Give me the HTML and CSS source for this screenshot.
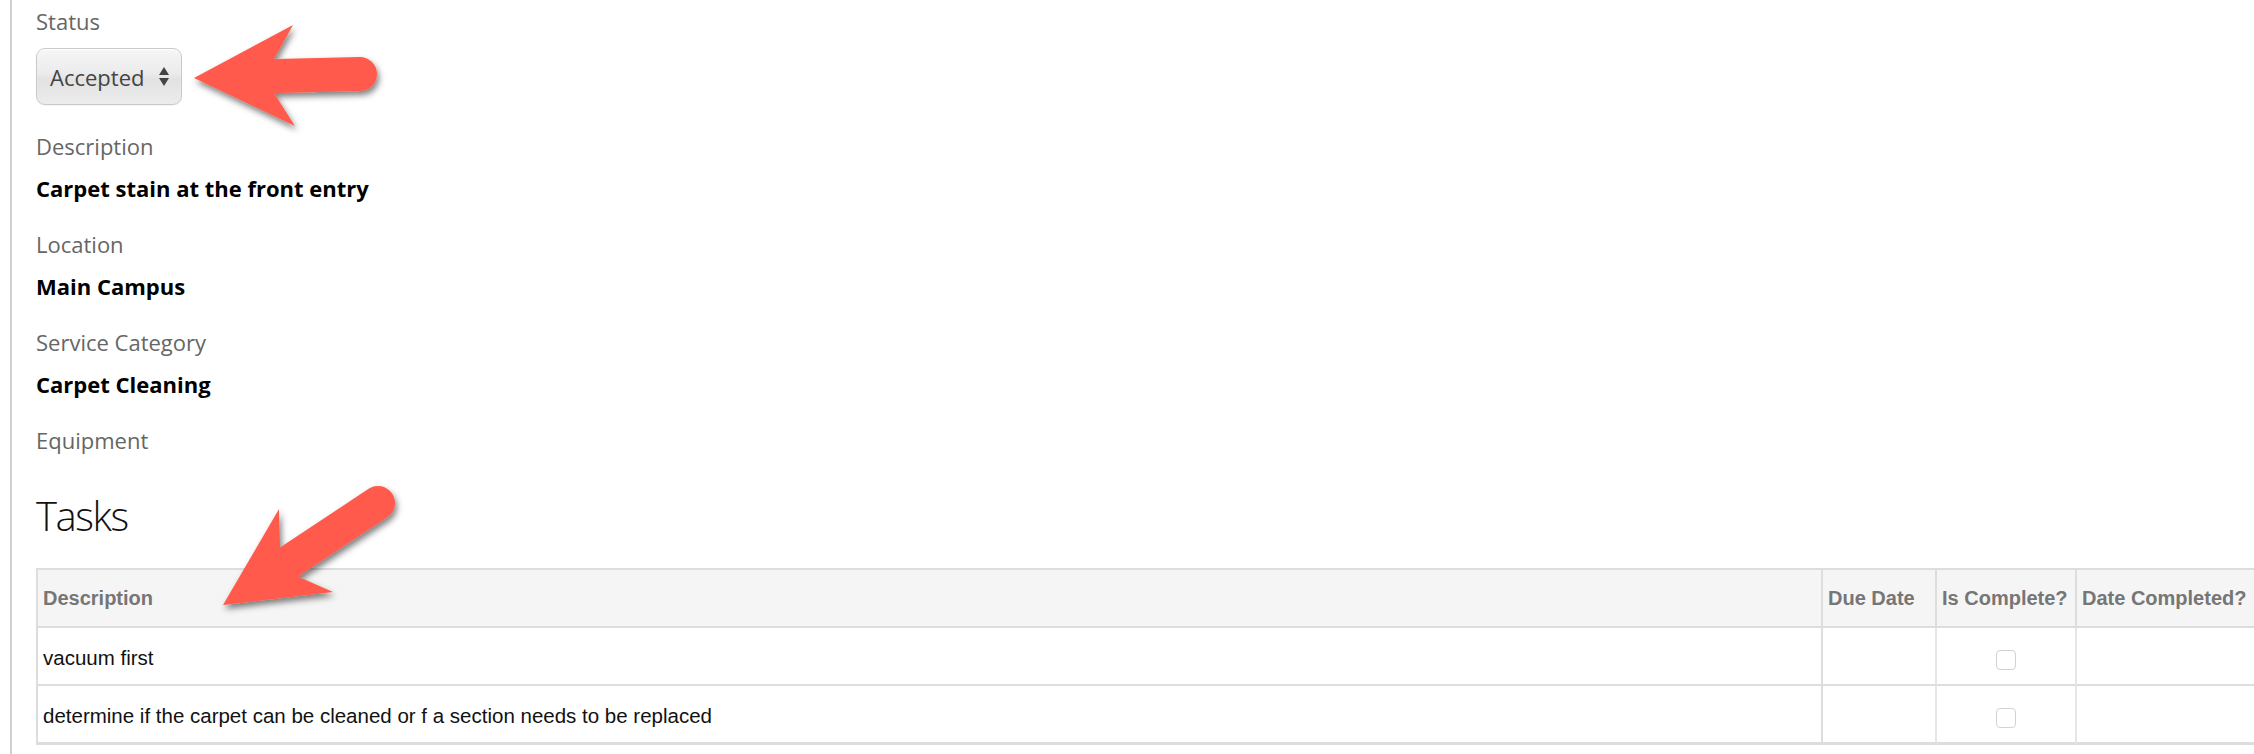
FILE: index.html
```html
<!DOCTYPE html>
<html lang="en">

<head>
    <meta charset="UTF-8">
    <title>Work Order</title>
    <link rel="stylesheet" href="styles.css">
</head>

<body>
    <div class="page">
        <div class="field">
            <div class="field-label">Status</div>
            <div class="select">
                <span class="select-text">Accepted</span>
                <svg class="select-arrows" width="10" height="20" viewBox="0 0 10 20">
                    <path d="M5 0 L10 8 L0 8 Z" fill="#444" />
                    <path d="M0 11 L10 11 L5 19 Z" fill="#444" />
                </svg>
            </div>
        </div>

        <div class="field">
            <div class="field-label">Description</div>
            <div class="field-value">Carpet stain at the front entry</div>
        </div>

        <div class="field">
            <div class="field-label">Location</div>
            <div class="field-value">Main Campus</div>
        </div>

        <div class="field">
            <div class="field-label">Service Category</div>
            <div class="field-value">Carpet Cleaning</div>
        </div>

        <div class="field">
            <div class="field-label">Equipment</div>
        </div>

        <h2 class="section-title">Tasks</h2>

        <table class="tasks">
            <colgroup>
                <col>
                <col class="col-due">
                <col class="col-complete">
                <col class="col-done">
            </colgroup>
            <thead>
                <tr>
                    <th>Description</th>
                    <th>Due Date</th>
                    <th>Is Complete?</th>
                    <th>Date Completed?</th>
                </tr>
            </thead>
            <tbody>
                <tr>
                    <td>vacuum first</td>
                    <td></td>
                    <td class="center"><input type="checkbox" class="check"></td>
                    <td></td>
                </tr>
                <tr class="last">
                    <td>determine if the carpet can be cleaned or f a section needs to be replaced</td>
                    <td></td>
                    <td class="center"><input type="checkbox" class="check"></td>
                    <td></td>
                </tr>
            </tbody>
        </table>
    </div>

    <!-- annotation arrows -->
    <svg class="marks" width="2254" height="754" viewBox="0 0 2254 754">
        <defs>
            <filter id="shadow" x="-20%" y="-20%" width="140%" height="140%">
                <feDropShadow dx="2" dy="4" stdDeviation="3" flood-color="#000" flood-opacity="0.5" />
            </filter>
        </defs>
        <g filter="url(#shadow)" fill="#ff5a4b">
            <line x1="276" y1="76" x2="360" y2="74" stroke="#ff5a4b" stroke-width="34" stroke-linecap="round" />
            <polygon points="194,78 293,25 274,59 274,93 295,126" />
        </g>
        <g filter="url(#shadow)" fill="#ff5a4b">
            <line x1="289" y1="562" x2="378" y2="503" stroke="#ff5a4b" stroke-width="34" stroke-linecap="round" />
            <polygon points="223,605 279,509 280,547 299,577 333,592" />
        </g>
    </svg>
</body>

</html>
```

FILE: styles.css
```css
body {
    margin: 0;
    padding: 0;
    background-color: #fff;
    font-family: 'Open Sans', sans-serif;
    position: relative;
    overflow: hidden;
    height: 754px;
}

.page {
    margin-left: 10px;
    border-left: 2px solid #d0d0d0;
    padding: 6px 0 0 24px;
    height: 100%;
    box-sizing: border-box;
}

.field {
    margin-bottom: 26px;
}

.field-label {
    font-size: 22px;
    line-height: 30px;
    color: #666;
    margin-bottom: 12px;
}

.field-value {
    font-size: 22px;
    line-height: 30px;
    font-weight: bold;
    color: #000;
}

/* Status select */
.select {
    width: 146px;
    height: 57px;
    box-sizing: border-box;
    display: flex;
    align-items: center;
    padding: 0 12px 0 13px;
    border: 1.5px solid #c9c9c9;
    border-radius: 9px;
    background: linear-gradient(#f6f6f6, #ebebeb 45%, #e2e2e2 55%, #ececec);
    box-shadow: inset 0 1px 1px #fff, 0 1px 1px rgba(0, 0, 0, 0.05);
}

.select-text {
    font-size: 22px;
    line-height: 30px;
    color: #444;
    flex: 1;
}

.select-arrows {
    display: block;
}

.section-title {
    font-size: 40px;
    font-weight: 300;
    letter-spacing: -1.4px;
    line-height: 50px;
    color: #111;
    margin: 36px 0 27px;
}

/* Tasks table */
.tasks {
    width: 2224px;
    table-layout: fixed;
    border-collapse: separate;
    border-spacing: 0;
    border-top: 2px solid #ddd;
    border-left: 2px solid #ddd;
    font-family: 'Liberation Sans', Arial, sans-serif;
    font-size: 20px;
}

.col-due {
    width: 114px;
}

.col-complete {
    width: 140px;
}

.col-done {
    width: 183px;
}

.tasks th,
.tasks td {
    box-sizing: border-box;
    border-right: 2px solid #ddd;
    border-bottom: 2px solid #ddd;
    text-align: left;
    line-height: 28px;
    white-space: nowrap;
    overflow: hidden;
}

.tasks th {
    background-color: #f5f5f5;
    color: #767676;
    font-weight: bold;
    padding: 14px 5px;
}

.tasks td {
    color: #111;
    font-size: 20.5px;
    padding: 16px 5px 12px;
}

.tasks td + td {
    border-right-color: #e6e6e6;
}

.tasks tr.last td {
    border-bottom-width: 3px;
}

.tasks td.center {
    text-align: center;
}

.check {
    -webkit-appearance: none;
    appearance: none;
    width: 20px;
    height: 20px;
    margin: 0;
    border: 1px solid #d2d2d2;
    border-radius: 4px;
    background-color: #fff;
    vertical-align: middle;
}

/* arrows drawn over the page */
.marks {
    position: absolute;
    top: 0;
    left: 0;
    pointer-events: none;
}
```
